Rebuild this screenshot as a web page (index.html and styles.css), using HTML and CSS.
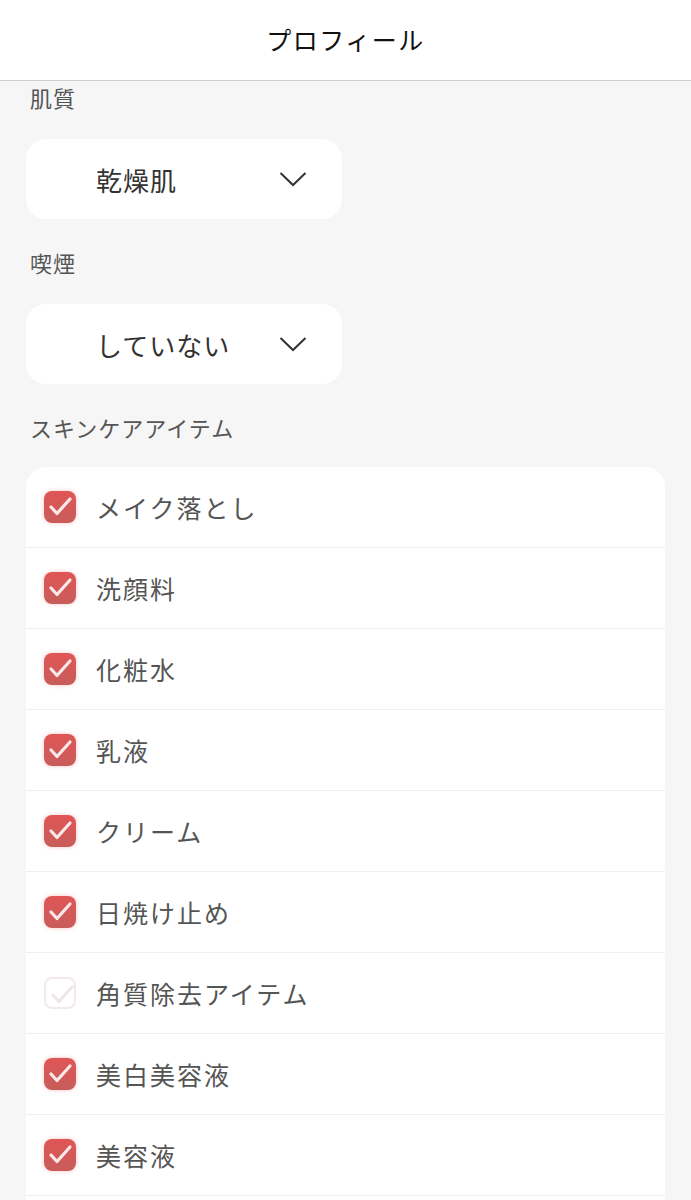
FILE: index.html
```html
<!DOCTYPE html>
<html lang="ja">
<head>
  <meta charset="UTF-8" />
  <meta name="viewport" content="width=device-width, initial-scale=1.0"/>
  <title>プロフィール</title>
  <link rel="stylesheet" href="styles.css">
</head>
<body>

  <!-- Title bar -->
  <header class="topbar">
    <h1>プロフィール</h1>
  </header>

  <main class="profile">
    <!-- Skin type -->
    <div class="field-label">肌質</div>
    <div class="select-box">
      <span class="select-value">乾燥肌</span>
      <svg class="chevron" width="28" height="16" viewBox="0 0 28 16"><polyline points="1.5,2 14,14 26.5,2" fill="none" stroke="#333" stroke-width="2"/></svg>
    </div>

    <!-- Smoking -->
    <div class="field-label">喫煙</div>
    <div class="select-box">
      <span class="select-value">していない</span>
      <svg class="chevron" width="28" height="16" viewBox="0 0 28 16"><polyline points="1.5,2 14,14 26.5,2" fill="none" stroke="#333" stroke-width="2"/></svg>
    </div>

    <!-- Skincare items -->
    <div class="field-label">スキンケアアイテム</div>
    <ul class="item-list" id="items"></ul>
  </main>

  <script>
    const items = [
      { name: "メイク落とし", on: true },
      { name: "洗顔料", on: true },
      { name: "化粧水", on: true },
      { name: "乳液", on: true },
      { name: "クリーム", on: true },
      { name: "日焼け止め", on: true },
      { name: "角質除去アイテム", on: false },
      { name: "美白美容液", on: true },
      { name: "美容液", on: true },
    ];

    const list = document.getElementById("items");
    items.forEach(item => {
      const li = document.createElement("li");
      li.className = "item";
      li.innerHTML = `
        <span class="check ${item.on ? "on" : "off"}">
          <svg width="34" height="34" viewBox="0 0 34 34"><polyline points="8,17 14,23.5 27,9" fill="none" stroke-width="3.2" stroke-linecap="round" stroke-linejoin="round"/></svg>
        </span>
        <span class="item-name">${item.name}</span>
      `;
      list.appendChild(li);
    });
  </script>

</body>
</html>
```

FILE: styles.css
```css
body {
  font-family: "Noto Sans CJK JP", "Noto Sans", sans-serif;
  background-color: #f6f6f6;
  margin: 0;
  padding: 0;
  color: #555;
}

.topbar {
  background-color: #fff;
  height: 81px;
  border-bottom: 1px solid #cfcfcf;
  display: flex;
  align-items: center;
  justify-content: center;
  box-sizing: border-box;
  padding-bottom: 2px;
}

.topbar h1 {
  margin: 0;
  font-size: 25px;
  font-weight: normal;
  color: #111;
  letter-spacing: 1.5px;
}

.profile {
  padding: 0 26px;
}

.field-label {
  font-size: 22px;
  color: #555;
  padding-left: 4px;
  height: 32px;
  line-height: 32px;
  margin-bottom: 26px;
  letter-spacing: 1px;
}

.select-box {
  width: 316px;
  height: 80px;
  background-color: #fff;
  border-radius: 20px;
  display: flex;
  align-items: center;
  justify-content: space-between;
  padding: 0 35px 0 70px;
  box-sizing: border-box;
  margin-bottom: 27px;
}

.select-value {
  font-size: 26px;
  color: #333;
  letter-spacing: 1px;
}

.chevron {
  display: block;
}

.item-list {
  list-style: none;
  margin: -2px 0 0;
  padding: 0 0 40px;
  background-color: #fff;
  border-radius: 20px 20px 0 0;
}

.item {
  height: 80px;
  border-bottom: 1px solid #f2eeee;
  display: flex;
  align-items: center;
  padding-left: 18px;
}

.check {
  width: 32px;
  height: 32px;
  border-radius: 8px;
  box-sizing: border-box;
  position: relative;
  margin-right: 20px;
  flex-shrink: 0;
}

.check svg {
  position: absolute;
  left: -1px;
  top: -1px;
}

.check.on {
  background: linear-gradient(#e05555, #c75d5b);
  box-shadow: 0 0 4px rgba(230, 120, 120, 0.45);
}

.check.on polyline {
  stroke: #fbe9e9;
}

.check.off {
  border: 2px solid #f3e9e9;
}

.check.off polyline {
  stroke: #efe6e6;
}

.item-name {
  font-size: 25px;
  color: #555;
  letter-spacing: 2px;
}
```
